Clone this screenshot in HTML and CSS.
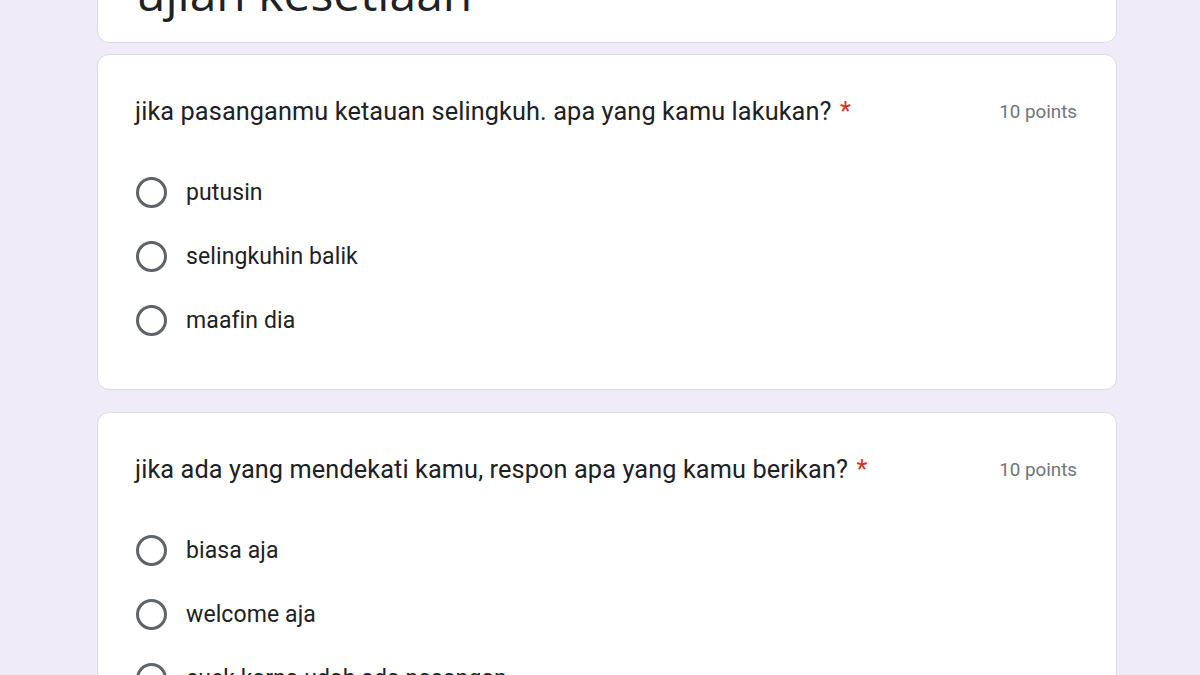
FILE: index.html
```html
<!DOCTYPE html>
<html lang="id">
<head>
<meta charset="utf-8">
<title>ujian kesetiaan</title>
<link rel="stylesheet" href="styles.css">
</head>
<body>
<main class="form">
  <section class="card card-title">
    <h1 class="form-title">ujian kesetiaan</h1>
  </section>

  <section class="card question">
    <div class="q-head">
      <div class="q-text">jika pasanganmu ketauan selingkuh. apa yang kamu lakukan? <span class="req">*</span></div>
      <div class="q-points">10 points</div>
    </div>
    <ul class="options">
      <li class="option"><span class="radio"></span><span class="label">putusin</span></li>
      <li class="option"><span class="radio"></span><span class="label">selingkuhin balik</span></li>
      <li class="option"><span class="radio"></span><span class="label">maafin dia</span></li>
    </ul>
  </section>

  <section class="card question">
    <div class="q-head">
      <div class="q-text">jika ada yang mendekati kamu, respon apa yang kamu berikan? <span class="req">*</span></div>
      <div class="q-points">10 points</div>
    </div>
    <ul class="options">
      <li class="option"><span class="radio"></span><span class="label">biasa aja</span></li>
      <li class="option"><span class="radio"></span><span class="label">welcome aja</span></li>
      <li class="option"><span class="radio"></span><span class="label">cuek karna udah ada pasangan</span></li>
    </ul>
  </section>
</main>
</body>
</html>
```

FILE: styles.css
```css
html, body {
  margin: 0;
  padding: 0;
  background: #f0ebf8;
  height: 100%;
  overflow: hidden;
}

body {
  font-family: Roboto, "Liberation Sans", Arial, sans-serif;
  color: #202124;
}

.form {
  width: 1020px;
  margin-left: 97px;
  display: flex;
  flex-direction: column;
  gap: 11px;
}

.card {
  background: #fff;
  border: 1px solid #dadce0;
  border-radius: 12px;
  box-sizing: border-box;
}

.card-title {
  margin-top: -60px;
  height: 103px;
  border-top-left-radius: 0;
  border-top-right-radius: 0;
  padding: 0 40px 0 38px;
  display: flex;
  align-items: flex-end;
}

.form-title {
  margin: 0 0 21px 0;
  font-family: "Open Sans", "Noto Sans", sans-serif;
  font-weight: 400;
  font-size: 48px;
  line-height: 56px;
  color: #202124;
}

.question + .question {
  margin-top: 11px;
}

.question {
  padding: 36px 39px 37px 37px;
}

.q-head {
  display: flex;
  align-items: center;
  justify-content: space-between;
  height: 42px;
}

.q-text {
  font-size: 25.3px;
  line-height: 42px;
  letter-spacing: 0.1px;
}

.req {
  color: #d93025;
  margin-left: 2px;
}

.q-points {
  font-size: 18.8px;
  color: #70757a;
}

.options {
  list-style: none;
  margin: 27px 0 0 0;
  padding: 0;
}

.option {
  display: flex;
  align-items: center;
  height: 64px;
}

.radio {
  width: 31px;
  height: 31px;
  box-sizing: border-box;
  border: 3px solid #5f6368;
  border-radius: 50%;
  margin-left: 1px;
  margin-right: 19px;
  flex: none;
}

.label {
  font-size: 23px;
  letter-spacing: 0.1px;
  color: #202124;
}
```
